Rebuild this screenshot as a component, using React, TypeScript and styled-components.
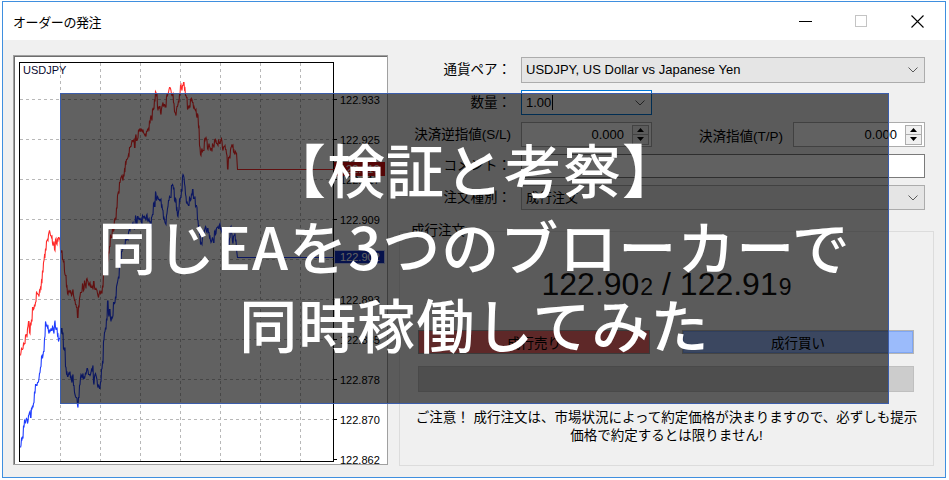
import React from "react";
import styled, { createGlobalStyle } from "styled-components";

const GlobalStyle = createGlobalStyle`
  html, body {
    margin: 0;
    padding: 0;
    background: #ffffff;
  }
  body {
    width: 949px;
    height: 480px;
    overflow: hidden;
    font-family: "Liberation Sans", "Noto Sans CJK JP", sans-serif;
    color: #000;
  }
`;

const Page = styled.div`
  position: relative;
  width: 949px;
  height: 480px;
  overflow: hidden;
  background: #ffffff;
`;

const Window = styled.div`
  margin: 1px 0 0 2px;
  width: 944px;
  height: 477px;
  box-sizing: border-box;
  border: 1px solid #3f8fdf;
  background: #f0f0f0;
  display: flex;
  flex-direction: column;
`;

const TitleBar = styled.div`
  flex: none;
  height: 38px;
  background: #ffffff;
  display: flex;
  align-items: center;
`;

const Title = styled.div`
  flex: 1;
  padding-left: 10px;
  font-family: "Noto Sans CJK JP", sans-serif;
  font-size: 13px;
  letter-spacing: -0.4px;
  color: #000;
`;

const CaptionButton = styled.div`
  width: 56px;
  height: 38px;
  display: flex;
  align-items: center;
  justify-content: center;
`;

const Body = styled.div`
  flex: 1;
  display: flex;
  padding: 15px 0 0 10px;
  min-height: 0;
`;

const ChartFrame = styled.div`
  flex: none;
  width: 375px;
  height: 410px;
  box-sizing: border-box;
  border: 1px solid #a0a0a0;
  box-shadow: inset 1px 1px 0 #6d6d6d;
  background: #ffffff;
  padding: 6px 0 0 5px;
`;

const RightPanel = styled.div`
  flex: 1;
  display: flex;
  flex-direction: column;
  min-width: 0;
`;

const FormGrid = styled.div`
  display: grid;
  grid-template-columns: 123px 404px;
  grid-template-rows: 26px 25px 25px 24px 25px;
  column-gap: 10px;
  row-gap: 7px;
  margin-top: 2px;
`;

const FieldLabel = styled.div`
  align-self: center;
  text-align: right;
  white-space: nowrap;
  font-size: 13.5px;
  line-height: 18px;
`;

const Combo = styled.div<{ $width?: number; $focused?: boolean }>`
  ${(p) => (p.$width ? `width: ${p.$width}px;` : "")}
  height: 100%;
  box-sizing: border-box;
  display: flex;
  align-items: center;
  border: 1px solid ${(p) => (p.$focused ? "#0078d7" : "#acacac")};
  background: ${(p) => (p.$focused ? "#ffffff" : "#e5e5e5")};
  padding: 0 6px 0 4px;
  font-size: 13px;
  line-height: 16px;
  white-space: nowrap;
`;

const ComboText = styled.span`
  flex: 1;
  display: flex;
  align-items: center;
`;

const Caret = styled.span`
  display: inline-block;
  width: 1px;
  height: 15px;
  background: #000;
  margin-left: 1px;
`;

const SpinRow = styled.div`
  display: flex;
  align-items: stretch;
  height: 100%;
`;

const Spin = styled.div<{ $width: number }>`
  width: ${(p) => p.$width}px;
  flex: none;
  box-sizing: border-box;
  display: flex;
  align-items: center;
  border: 1px solid #acacac;
  background: #ffffff;
  padding-right: 2px;
`;

const SpinValue = styled.span`
  flex: 1;
  text-align: right;
  padding-right: 8px;
  font-size: 13px;
`;

const SpinButtons = styled.div`
  width: 17px;
  height: 20px;
  box-sizing: border-box;
  border: 1px solid #adadad;
  background: #f0f0f0;
  display: flex;
  flex-direction: column;
`;

const SpinHalf = styled.div<{ $top?: boolean }>`
  flex: 1;
  display: flex;
  align-items: center;
  justify-content: center;
  ${(p) => (p.$top ? "border-bottom: 1px solid #adadad;" : "")}
`;

const TpLabel = styled.div`
  flex: 1;
  align-self: center;
  text-align: right;
  padding-right: 10px;
  font-size: 13.5px;
  white-space: nowrap;
`;

const TextBox = styled.div`
  height: 100%;
  box-sizing: border-box;
  border: 1px solid #7a7a7a;
  background: #ffffff;
`;

const GroupBox = styled.div`
  flex: 1;
  margin: 21px 11px 11px 11px;
  border: 1px solid #dcdcdc;
  display: flex;
  flex-direction: column;
`;

const GroupLegend = styled.div`
  align-self: flex-start;
  margin: -10px 0 0 9px;
  padding: 0 2px;
  background: #f0f0f0;
  font-size: 13.5px;
  line-height: 18px;
`;

const PriceRow = styled.div`
  margin-top: 24px;
  display: flex;
  justify-content: center;
  align-items: baseline;
  font-family: "Liberation Sans", sans-serif;
  font-size: 32px;
  line-height: 40px;
  color: #111;
  white-space: pre;
`;

const PriceSmall = styled.span`
  font-size: 23px;
  margin-left: 1px;
`;

const TradeButtons = styled.div`
  margin-top: 23px;
  padding: 0 19px 0 18px;
  display: flex;
  justify-content: space-between;
  height: 24px;
`;

const TradeButton = styled.div<{ $kind: "sell" | "buy" }>`
  width: 232px;
  box-sizing: border-box;
  display: flex;
  align-items: center;
  justify-content: center;
  font-size: 13.5px;
  border: 1px solid ${(p) => (p.$kind === "sell" ? "#9a9a9a" : "#b4b4b4")};
  background: ${(p) => (p.$kind === "sell" ? "#f66a6a" : "#9bbbfb")};
  box-shadow: ${(p) => (p.$kind === "buy" ? "inset 0 0 0 1px #7fa6f3" : "none")};
`;

const DisabledBar = styled.div`
  margin: 12px 19px 0 18px;
  height: 26px;
  box-sizing: border-box;
  border: 1px solid #bfbfbf;
  background: #cccccc;
`;

const Notice = styled.div`
  margin-top: 17px;
  text-align: center;
  font-size: 13.5px;
  line-height: 18px;
  white-space: nowrap;
`;

const Overlay = styled.div`
  position: absolute;
  left: 60px;
  top: 93px;
  width: 829px;
  height: 311px;
  box-sizing: border-box;
  border: 1px solid #3b5dab;
  background: rgba(0, 0, 0, 0.62);
  display: flex;
  flex-direction: column;
  align-items: center;
  justify-content: center;
  padding-bottom: 5px;
`;

const HeadLine = styled.div`
  font-family: "Noto Sans CJK JP", sans-serif;
  font-weight: 500;
  font-size: 58px;
  line-height: 77.5px;
  letter-spacing: 1px;
  color: #ffffff;
  white-space: nowrap;
`;

/* ---------- chart ---------- */

type P = [number, number];

const RED: P[] = [
  [20, 355], [23, 345], [27, 330], [31, 318], [35, 300], [39, 290], [43, 262], [46, 240],
  [50, 232], [54, 245], [58, 235], [61, 252], [63, 270], [67, 290], [72, 292], [77, 313],
  [80, 290], [87, 280], [93, 287], [97, 290], [100, 297], [103, 277], [107, 260], [111, 235],
  [115, 215], [118, 190], [122, 175], [127, 157], [130, 142], [135, 138], [140, 130], [145, 132],
  [150, 120], [155, 98], [160, 110], [165, 104], [168, 92], [172, 90], [175, 115], [179, 95],
  [183, 78], [187, 105], [192, 100], [197, 117], [200, 157], [205, 140], [210, 150], [215, 142],
  [220, 140], [224, 150], [227, 157], [233, 147], [236, 152], [237, 169], [333, 169],
];

const BLUE: P[] = [
  [20, 447], [23, 425], [27, 420], [31, 410], [35, 388], [39, 375], [43, 350], [45, 325],
  [50, 332], [54, 320], [58, 337], [61, 328], [63, 345], [66, 370], [71, 376], [75, 392],
  [77, 405], [80, 378], [86, 372], [92, 370], [96, 378], [99, 390], [103, 350], [107, 305],
  [111, 320], [115, 292], [118, 272], [122, 250], [127, 232], [131, 225], [136, 218], [141, 220],
  [146, 215], [150, 225], [155, 195], [160, 200], [165, 225], [168, 200], [172, 185], [177, 213],
  [183, 173], [187, 210], [192, 192], [197, 215], [200, 243], [205, 225], [210, 240], [215, 230],
  [220, 228], [225, 245], [230, 235], [235, 240], [237, 257], [333, 257],
];

function mulberry32(seed: number) {
  let a = seed;
  return () => {
    a |= 0;
    a = (a + 0x6d2b79f5) | 0;
    let t = Math.imul(a ^ (a >>> 15), 1 | a);
    t = (t + Math.imul(t ^ (t >>> 7), 61 | t)) ^ t;
    return ((t ^ (t >>> 14)) >>> 0) / 4294967296;
  };
}

const OX = 19;
const OY = 62;

function jaggedPath(keys: P[], seed: number, amp: number): string {
  const rnd = mulberry32(seed);
  const pts: P[] = [];
  for (let i = 0; i < keys.length - 1; i++) {
    const [x0, y0] = keys[i];
    const [x1, y1] = keys[i + 1];
    const steps = Math.max(1, Math.round(x1 - x0));
    for (let s = 0; s < steps; s++) {
      const t = s / steps;
      const x = x0 + (x1 - x0) * t;
      let y = y0 + (y1 - y0) * t;
      if (x < 236 && !(i === 0 && s === 0)) {
        y += (rnd() - 0.5) * amp;
        if (rnd() < 0.18) y += (rnd() - 0.5) * amp * 1.6;
      }
      pts.push([Math.round(x), Math.round(y)]);
      if (x < 236) pts.push([Math.round(x) + 0.5, Math.round(y + (rnd() - 0.5) * amp * 0.6)]);
    }
  }
  pts.push(keys[keys.length - 1]);
  return (
    "M" +
    pts.map(([x, y]) => `${(x - OX + 0.5).toFixed(1)},${(y - OY + 0.5).toFixed(1)}`).join(" L")
  );
}

const GRID_X = [41, 81, 121, 161, 201, 241, 281];
const GRID_Y = [37.5, 77.5, 117.5, 157.5, 197.5, 237.5, 277.5, 317.5, 357.5];
const LABELS: [string, number][] = [
  ["122.933", 37.5],
  ["122.925", 77.5],
  ["122.917", 117.5],
  ["122.909", 157.5],
  ["122.893", 237.5],
  ["122.885", 277.5],
  ["122.878", 317.5],
  ["122.870", 357.5],
  ["122.862", 397.5],
];

const redPath = jaggedPath(RED, 7, 9);
const bluePath = jaggedPath(BLUE, 19, 9);

function PriceChart() {
  return (
    <svg width={368} height={402} viewBox="0 0 368 402" style={{ display: "block" }}>
      <rect x={0.5} y={0.5} width={314} height={399} fill="#ffffff" stroke="#000000" />
      {GRID_X.map((x) => (
        <line key={"gx" + x} x1={x + 0.5} y1={1} x2={x + 0.5} y2={399} stroke="#b8b8b8" strokeDasharray="3 3" />
      ))}
      {GRID_Y.map((y) => (
        <line key={"gy" + y} x1={1} y1={y} x2={314} y2={y} stroke="#b8b8b8" strokeDasharray="3 3" />
      ))}
      <text x={4} y={12} fontFamily="Liberation Sans, sans-serif" fontSize={11} fill="#0a0a30">
        USDJPY
      </text>
      <path d={redPath} fill="none" stroke="#ff2a2a" strokeWidth={1.1} />
      <path d={bluePath} fill="none" stroke="#1f3dff" strokeWidth={1.1} />
      {LABELS.map(([t, y]) => (
        <g key={t}>
          <line x1={314} y1={y} x2={318} y2={y} stroke="#000" />
          <text x={321} y={y + 4} fontFamily="Liberation Sans, sans-serif" fontSize={11} fill="#000">
            {t}
          </text>
        </g>
      ))}
      <line x1={314} y1={197.5} x2={318} y2={197.5} stroke="#000" />
      <rect x={315} y={100} width={51} height={14} fill="#e01010" />
      <text x={321} y={111} fontFamily="Liberation Sans, sans-serif" fontSize={11} fill="#ffffff">
        122.919
      </text>
      <rect x={315.5} y={188.5} width={50} height={13} fill="#1030c8" stroke="#c8d0ff" />
      <text x={321} y={199} fontFamily="Liberation Sans, sans-serif" fontSize={11} fill="#ffffff">
        122.902
      </text>
    </svg>
  );
}

function Chevron() {
  return (
    <svg width={10} height={6} viewBox="0 0 10 6">
      <path d="M0.5 0.5 L5 5 L9.5 0.5" fill="none" stroke="#5a5a5a" strokeWidth={1} />
    </svg>
  );
}

function Arrow({ up }: { up?: boolean }) {
  return (
    <svg width={7} height={4} viewBox="0 0 7 4">
      <path d={up ? "M0 4 L3.5 0 L7 4 Z" : "M0 0 L3.5 4 L7 0 Z"} fill="#000" />
    </svg>
  );
}

function SpinBox({ width }: { width: number }) {
  return (
    <Spin $width={width}>
      <SpinValue>0.000</SpinValue>
      <SpinButtons>
        <SpinHalf $top>
          <Arrow up />
        </SpinHalf>
        <SpinHalf>
          <Arrow />
        </SpinHalf>
      </SpinButtons>
    </Spin>
  );
}

export default function App() {
  return (
    <>
      <GlobalStyle />
      <Page>
        <Window>
          <TitleBar>
            <Title>オーダーの発注</Title>
            <CaptionButton>
              <svg width={13} height={1} viewBox="0 0 13 1">
                <rect width={13} height={1} fill="#000" />
              </svg>
            </CaptionButton>
            <CaptionButton>
              <svg width={12} height={12} viewBox="0 0 12 12">
                <rect x={0.5} y={0.5} width={11} height={11} fill="none" stroke="#c4c4c4" />
              </svg>
            </CaptionButton>
            <CaptionButton>
              <svg width={13} height={13} viewBox="0 0 13 13">
                <path d="M0.5 0.5 L12.5 12.5 M12.5 0.5 L0.5 12.5" stroke="#000" strokeWidth={1.1} />
              </svg>
            </CaptionButton>
          </TitleBar>
          <Body>
            <ChartFrame>
              <PriceChart />
            </ChartFrame>
            <RightPanel>
              <FormGrid>
                <FieldLabel>通貨ペア：</FieldLabel>
                <Combo>
                  <ComboText>USDJPY, US Dollar vs Japanese Yen</ComboText>
                  <Chevron />
                </Combo>

                <FieldLabel>数量：</FieldLabel>
                <Combo $width={131} $focused>
                  <ComboText>
                    1.00
                    <Caret />
                  </ComboText>
                  <Chevron />
                </Combo>

                <FieldLabel>決済逆指値(S/L)</FieldLabel>
                <SpinRow>
                  <SpinBox width={131} />
                  <TpLabel>決済指値(T/P)</TpLabel>
                  <SpinBox width={132} />
                </SpinRow>

                <FieldLabel>コメント：</FieldLabel>
                <TextBox />

                <FieldLabel>注文種別：</FieldLabel>
                <Combo>
                  <ComboText>成行注文</ComboText>
                  <Chevron />
                </Combo>
              </FormGrid>

              <GroupBox>
                <GroupLegend>成行注文</GroupLegend>
                <PriceRow>
                  122.90<PriceSmall>2</PriceSmall> / 122.91<PriceSmall>9</PriceSmall>
                </PriceRow>
                <TradeButtons>
                  <TradeButton $kind="sell">成行売り</TradeButton>
                  <TradeButton $kind="buy">成行買い</TradeButton>
                </TradeButtons>
                <DisabledBar />
                <Notice>
                  ご注意！ 成行注文は、市場状況によって約定価格が決まりますので、必ずしも提示
                  <br />
                  価格で約定するとは限りません!
                </Notice>
              </GroupBox>
            </RightPanel>
          </Body>
        </Window>
        <Overlay>
          <HeadLine>【検証と考察】</HeadLine>
          <HeadLine>同じEAを3つのブローカーで</HeadLine>
          <HeadLine>同時稼働してみた</HeadLine>
        </Overlay>
      </Page>
    </>
  );
}
